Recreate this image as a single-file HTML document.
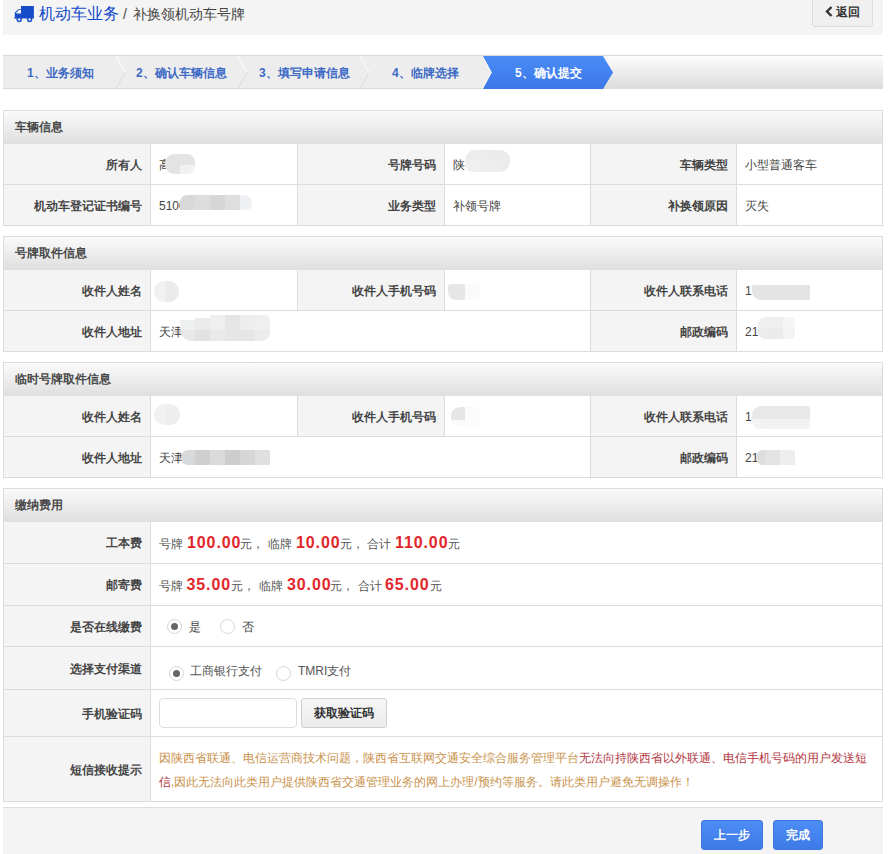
<!DOCTYPE html><html><head><meta charset="utf-8"><style>
*{box-sizing:border-box;margin:0;padding:0}
html,body{width:889px;height:854px;overflow:hidden;background:#fff}
body{font-family:"Liberation Sans",sans-serif;font-size:12px;color:#444;position:relative}
.a{position:absolute}
.hdr{left:3px;top:0;width:880px;height:35px;background:#f4f4f4}
.ttl{left:39px;top:4px;font-size:16px;color:#1048c8;white-space:nowrap;line-height:20px}
.sub{font-size:14px;color:#444}
.back{left:812px;top:-3px;width:61px;height:30px;border:1px solid #dcdcdc;border-radius:3px;background:#f0f0f0;font-weight:bold;font-size:12px;color:#333;line-height:28px;padding-left:12px;white-space:nowrap}
.steps{left:3px;top:55px;width:880px;height:34px;background:linear-gradient(#fcfcfc,#dcdcdc);border-top:1px solid #dadada}
.st{top:1px;height:33px;line-height:33px;font-weight:bold;font-size:12px;color:#3d6ac6;white-space:nowrap}
.pnl{left:3px;width:880px;border:1px solid #dcdcdc;background:#fff}
.ph{left:0;top:0;width:878px;height:33px;background:linear-gradient(#fafafa,#dfdfdf);font-weight:bold;color:#484848;line-height:32px;padding-left:11px}
.c{position:absolute;border-color:#dcdcdc;border-style:solid;border-width:0}
.lb{background:#f4f4f4;font-weight:bold;color:#444;text-align:right;padding-right:8px;padding-top:2px;display:flex;align-items:center;justify-content:flex-end}
.vl{z-index:2;display:flex;align-items:center;padding-left:8px;padding-top:2px;color:#444;white-space:nowrap}
.blob{position:absolute;background:#e6e6e6;border-radius:8px}
.red{color:#e3262b;font-weight:bold;font-size:16px}
.radio{position:absolute;width:15px;height:15px;border:1px solid #d6d6d6;border-radius:50%;background:#fff}
.radio.on::after{content:"";position:absolute;left:3px;top:3px;width:7px;height:7px;border-radius:50%;background:#666}
.btnb{position:absolute;border:1px solid #3a78e0;border-radius:3px;background:linear-gradient(#4d8cf5,#3d7ae6);color:#fff;font-weight:bold;font-size:12px;text-align:center;line-height:29px}
</style></head><body>
<div class="a hdr"></div>
<svg class="a" style="left:12px;top:4px" width="25" height="20" viewBox="0 0 25 20"><path fill="#154dc8" d="M9 2.1H21.9V14.6H9z M2.8 14.6V8.5L6.3 5.2H9.5V14.6z M2 13.8H4V14.6H2z"/><path fill="#f4f4f4" d="M4.2 9.6V8.7L6.7 6H9V9.6z"/><circle cx="7.2" cy="15.5" r="2.7" fill="#154dc8"/><circle cx="7.2" cy="15.5" r="1.2" fill="#f4f4f4"/><circle cx="17.6" cy="15.5" r="2.7" fill="#154dc8"/><circle cx="17.6" cy="15.5" r="1.2" fill="#f4f4f4"/></svg>
<div class="a ttl">机动车业务</div><div class="a sub" style="left:123px;top:5px;line-height:18px">/</div><div class="a sub" style="left:133px;top:5px;line-height:18px;white-space:nowrap">补换领机动车号牌</div>
<div class="a back"><svg style="position:absolute;left:12px;top:8px" width="8" height="11" viewBox="0 0 8 11"><path d="M6.5 1 L2 5.5 L6.5 10" fill="none" stroke="#333" stroke-width="2.4"/></svg><span style="position:absolute;left:23px;top:0">返回</span></div>
<div class="a steps">
<div class="a" style="left:0;top:0;width:486px;height:33px;background:#ededed;border-bottom:1px solid #d9d9d9"></div>
<svg class="a" style="left:112px;top:0" width="14" height="33" viewBox="0 0 14 33"><path d="M1 0 L10 16.5" fill="none" stroke="#fbfbfb" stroke-width="1.2"/><path d="M10 16.5 L1 33" fill="none" stroke="#dedede" stroke-width="1.1"/></svg>
<svg class="a" style="left:234px;top:0" width="14" height="33" viewBox="0 0 14 33"><path d="M1 0 L10 16.5" fill="none" stroke="#fbfbfb" stroke-width="1.2"/><path d="M10 16.5 L1 33" fill="none" stroke="#dedede" stroke-width="1.1"/></svg>
<svg class="a" style="left:356px;top:0" width="14" height="33" viewBox="0 0 14 33"><path d="M1 0 L10 16.5" fill="none" stroke="#fbfbfb" stroke-width="1.2"/><path d="M10 16.5 L1 33" fill="none" stroke="#dedede" stroke-width="1.1"/></svg>
<svg class="a" style="left:476px;top:0" width="136" height="33" viewBox="0 0 136 33"><defs><linearGradient id="g" x1="0" y1="0" x2="0" y2="1"><stop offset="0" stop-color="#4b8cf6"/><stop offset="1" stop-color="#3a78e8"/></linearGradient></defs><path d="M0 0 L3.8 0 L12.7 16.5 L3.8 32 L0 32z" fill="#ededed"/><path d="M3.8 0 H124 L134 16.5 L124 33 H3.8 L12.7 16.5z" fill="url(#g)"/><path d="M3.3 0 L12.2 16.5 L3.3 33" fill="none" stroke="#fafafa" stroke-width="0.9"/></svg>
<div class="a st" style="left:24px">1、业务须知</div>
<div class="a st" style="left:133px">2、确认车辆信息</div>
<div class="a st" style="left:256px">3、填写申请信息</div>
<div class="a st" style="left:389px">4、临牌选择</div>
<div class="a st" style="left:512px;color:#fff">5、确认提交</div>
</div>
<div class="a pnl" style="top:110px;height:116px">
<div class="a ph">车辆信息</div>
<div class="c lb" style="left:0px;top:33px;width:146px;height:40px;border-left-width:0px;border-top-width:0px;">所有人</div>
<div class="c vl" style="left:146px;top:33px;width:147px;height:40px;border-left-width:1px;border-top-width:0px;">高</div>
<div class="c lb" style="left:293px;top:33px;width:147px;height:40px;border-left-width:1px;border-top-width:0px;">号牌号码</div>
<div class="c vl" style="left:440px;top:33px;width:146px;height:40px;border-left-width:1px;border-top-width:0px;">陕</div>
<div class="c lb" style="left:586px;top:33px;width:146px;height:40px;border-left-width:1px;border-top-width:0px;">车辆类型</div>
<div class="c vl" style="left:732px;top:33px;width:146px;height:40px;border-left-width:1px;border-top-width:0px;">小型普通客车</div>
<div class="c lb" style="left:0px;top:73px;width:146px;height:41px;border-left-width:0px;border-top-width:1px;">机动车登记证书编号</div>
<div class="c vl" style="left:146px;top:73px;width:147px;height:41px;border-left-width:1px;border-top-width:1px;">5100</div>
<div class="c lb" style="left:293px;top:73px;width:147px;height:41px;border-left-width:1px;border-top-width:1px;">业务类型</div>
<div class="c vl" style="left:440px;top:73px;width:146px;height:41px;border-left-width:1px;border-top-width:1px;">补领号牌</div>
<div class="c lb" style="left:586px;top:73px;width:146px;height:41px;border-left-width:1px;border-top-width:1px;">补换领原因</div>
<div class="c vl" style="left:732px;top:73px;width:146px;height:41px;border-left-width:1px;border-top-width:1px;">灭失</div>
</div>
<div class="a pnl" style="top:236px;height:116px">
<div class="a ph">号牌取件信息</div>
<div class="c lb" style="left:0px;top:33px;width:146px;height:40px;border-left-width:0px;border-top-width:0px;">收件人姓名</div>
<div class="c vl" style="left:146px;top:33px;width:147px;height:40px;border-left-width:1px;border-top-width:0px;"></div>
<div class="c lb" style="left:293px;top:33px;width:147px;height:40px;border-left-width:1px;border-top-width:0px;">收件人手机号码</div>
<div class="c vl" style="left:440px;top:33px;width:146px;height:40px;border-left-width:1px;border-top-width:0px;"></div>
<div class="c lb" style="left:586px;top:33px;width:146px;height:40px;border-left-width:1px;border-top-width:0px;">收件人联系电话</div>
<div class="c vl" style="left:732px;top:33px;width:146px;height:40px;border-left-width:1px;border-top-width:0px;">1</div>
<div class="c lb" style="left:0px;top:73px;width:146px;height:41px;border-left-width:0px;border-top-width:1px;">收件人地址</div>
<div class="c vl" style="left:146px;top:73px;width:440px;height:41px;border-left-width:1px;border-top-width:1px;">天津</div>
<div class="c lb" style="left:586px;top:73px;width:146px;height:41px;border-left-width:1px;border-top-width:1px;">邮政编码</div>
<div class="c vl" style="left:732px;top:73px;width:146px;height:41px;border-left-width:1px;border-top-width:1px;">21</div>
</div>
<div class="a pnl" style="top:362px;height:116px">
<div class="a ph">临时号牌取件信息</div>
<div class="c lb" style="left:0px;top:33px;width:146px;height:40px;border-left-width:0px;border-top-width:0px;">收件人姓名</div>
<div class="c vl" style="left:146px;top:33px;width:147px;height:40px;border-left-width:1px;border-top-width:0px;"></div>
<div class="c lb" style="left:293px;top:33px;width:147px;height:40px;border-left-width:1px;border-top-width:0px;">收件人手机号码</div>
<div class="c vl" style="left:440px;top:33px;width:146px;height:40px;border-left-width:1px;border-top-width:0px;"></div>
<div class="c lb" style="left:586px;top:33px;width:146px;height:40px;border-left-width:1px;border-top-width:0px;">收件人联系电话</div>
<div class="c vl" style="left:732px;top:33px;width:146px;height:40px;border-left-width:1px;border-top-width:0px;">1</div>
<div class="c lb" style="left:0px;top:73px;width:146px;height:41px;border-left-width:0px;border-top-width:1px;">收件人地址</div>
<div class="c vl" style="left:146px;top:73px;width:440px;height:41px;border-left-width:1px;border-top-width:1px;">天津</div>
<div class="c lb" style="left:586px;top:73px;width:146px;height:41px;border-left-width:1px;border-top-width:1px;">邮政编码</div>
<div class="c vl" style="left:732px;top:73px;width:146px;height:41px;border-left-width:1px;border-top-width:1px;">21</div>
</div>
<div class="a pnl" style="top:488px;height:314px">
<div class="a ph">缴纳费用</div>
<div class="c lb" style="left:0px;top:33px;width:146px;height:41px;border-left-width:0px;border-top-width:0px;">工本费</div>
<div class="c vl" style="left:146px;top:33px;width:732px;height:41px;border-left-width:1px;border-top-width:0px;"></div>
<div class="c lb" style="left:0px;top:74px;width:146px;height:42px;border-left-width:0px;border-top-width:1px;">邮寄费</div>
<div class="c vl" style="left:146px;top:74px;width:732px;height:42px;border-left-width:1px;border-top-width:1px;"></div>
<div class="c lb" style="left:0px;top:116px;width:146px;height:41px;border-left-width:0px;border-top-width:1px;">是否在线缴费</div>
<div class="c vl" style="left:146px;top:116px;width:732px;height:41px;border-left-width:1px;border-top-width:1px;"></div>
<div class="c lb" style="left:0px;top:157px;width:146px;height:43px;border-left-width:0px;border-top-width:1px;">选择支付渠道</div>
<div class="c vl" style="left:146px;top:157px;width:732px;height:43px;border-left-width:1px;border-top-width:1px;"></div>
<div class="c lb" style="left:0px;top:200px;width:146px;height:47px;border-left-width:0px;border-top-width:1px;">手机验证码</div>
<div class="c vl" style="left:146px;top:200px;width:732px;height:47px;border-left-width:1px;border-top-width:1px;"></div>
<div class="c lb" style="left:0px;top:247px;width:146px;height:65px;border-left-width:0px;border-top-width:1px;">短信接收提示</div>
<div class="c vl" style="left:146px;top:247px;width:732px;height:65px;border-left-width:1px;border-top-width:1px;"></div>
</div>
<div class="a" style="left:159px;top:536px;line-height:16px;white-space:nowrap;color:#555">号牌</div>
<div class="a red" style="left:187px;top:533px;line-height:20px;letter-spacing:0.9px;white-space:nowrap">100.00</div>
<div class="a" style="left:240px;top:536px;line-height:16px;white-space:nowrap;color:#555">元，</div>
<div class="a" style="left:268px;top:536px;line-height:16px;white-space:nowrap;color:#555">临牌</div>
<div class="a red" style="left:296px;top:533px;line-height:20px;letter-spacing:0.9px;white-space:nowrap">10.00</div>
<div class="a" style="left:340px;top:536px;line-height:16px;white-space:nowrap;color:#555">元，</div>
<div class="a" style="left:367px;top:536px;line-height:16px;white-space:nowrap;color:#555">合计</div>
<div class="a red" style="left:395px;top:533px;line-height:20px;letter-spacing:0.9px;white-space:nowrap">110.00</div>
<div class="a" style="left:448px;top:536px;line-height:16px;white-space:nowrap;color:#555">元</div>
<div class="a" style="left:159px;top:578px;line-height:16px;white-space:nowrap;color:#555">号牌</div>
<div class="a red" style="left:186.5px;top:575px;line-height:20px;letter-spacing:0.9px;white-space:nowrap">35.00</div>
<div class="a" style="left:230.5px;top:578px;line-height:16px;white-space:nowrap;color:#555">元，</div>
<div class="a" style="left:258.5px;top:578px;line-height:16px;white-space:nowrap;color:#555">临牌</div>
<div class="a red" style="left:287px;top:575px;line-height:20px;letter-spacing:0.9px;white-space:nowrap">30.00</div>
<div class="a" style="left:330px;top:578px;line-height:16px;white-space:nowrap;color:#555">元，</div>
<div class="a" style="left:357.5px;top:578px;line-height:16px;white-space:nowrap;color:#555">合计</div>
<div class="a red" style="left:385px;top:575px;line-height:20px;letter-spacing:0.9px;white-space:nowrap">65.00</div>
<div class="a" style="left:429.5px;top:578px;line-height:16px;white-space:nowrap;color:#555">元</div>
<div class="radio on" style="left:167px;top:619px"></div><div class="a" style="left:189px;top:620px;line-height:15px">是</div>
<div class="radio" style="left:220px;top:619px"></div><div class="a" style="left:242px;top:620px;line-height:15px">否</div>
<div class="radio on" style="left:169px;top:666px"></div><div class="a" style="left:190px;top:664px;line-height:15px;color:#555">工商银行支付</div>
<div class="radio" style="left:276px;top:666px"></div><div class="a" style="left:298px;top:664px;line-height:15px;color:#555">TMRI支付</div>
<div class="a" style="left:159px;top:698px;width:138px;height:30px;border:1px solid #dcdcdc;border-radius:4px;background:#fff"></div>
<div class="a" style="left:301px;top:698px;width:86px;height:30px;border:1px solid #d0d0d0;border-radius:3px;background:linear-gradient(#f7f7f7,#ebebeb);font-weight:bold;font-size:12px;color:#333;text-align:center;line-height:29px">获取验证码</div>
<div class="a" style="left:159px;top:746px;width:720px;line-height:24px;color:#c8924b;font-size:12px">因陕西省联通、电信运营商技术问题，陕西省互联网交通安全综合服务管理平台<span style="color:#b3373f">无法向持陕西省以外联通、电信手机号码的用户发送短信</span>,因此无法向此类用户提供陕西省交通管理业务的网上办理/预约等服务。请此类用户避免无调操作！</div>
<div class="a" style="z-index:3;left:165px;top:154px;width:30px;height:20px;border-radius:9px 8px 8px 9px;overflow:hidden"><div class="a" style="left:0px;top:0px;width:15px;height:20px;background:#e3e3e3"></div><div class="a" style="left:15px;top:0px;width:15px;height:11px;background:#e4e4e4"></div><div class="a" style="left:15px;top:11px;width:15px;height:9px;background:#f1f1f1"></div></div>
<div class="a" style="z-index:3;left:180px;top:195px;width:72px;height:15px;border-radius:7px 8px 6px 2px;overflow:hidden"><div class="a" style="left:0px;top:0px;width:15px;height:15px;background:#d9d9d9"></div><div class="a" style="left:15px;top:0px;width:15px;height:15px;background:#dddddd"></div><div class="a" style="left:30px;top:0px;width:15px;height:15px;background:#d6d6d6"></div><div class="a" style="left:45px;top:0px;width:15px;height:15px;background:#dedede"></div><div class="a" style="left:60px;top:0px;width:12px;height:15px;background:#eef0f3"></div></div>
<div class="a" style="z-index:3;left:465px;top:150px;width:45px;height:22px;border-radius:10px 10px 10px 8px;overflow:hidden"><div class="a" style="left:0px;top:0px;width:16px;height:9px;background:#ececec"></div><div class="a" style="left:16px;top:0px;width:16px;height:9px;background:#ebebeb"></div><div class="a" style="left:32px;top:0px;width:15px;height:9px;background:#eaeaea"></div><div class="a" style="left:0px;top:9px;width:16px;height:13px;background:#efefef"></div><div class="a" style="left:16px;top:9px;width:16px;height:13px;background:#eeeeee"></div><div class="a" style="left:32px;top:9px;width:15px;height:13px;background:#ececec"></div></div>
<div class="a" style="z-index:3;left:154px;top:281px;width:25px;height:21px;border-radius:10px;overflow:hidden"><div class="a" style="left:0px;top:0px;width:12px;height:21px;background:#f1f1f1"></div><div class="a" style="left:12px;top:0px;width:13px;height:21px;background:#ebebeb"></div></div>
<div class="a" style="z-index:3;left:180px;top:315px;width:90px;height:26px;border-radius:4px 5px 8px 12px / 4px 5px 8px 12px;overflow:hidden"><div class="a" style="left:0px;top:5px;width:15px;height:10px;background:#eef0f0"></div><div class="a" style="left:15px;top:3px;width:15px;height:12px;background:#ebebeb"></div><div class="a" style="left:30px;top:0px;width:15px;height:15px;background:#efefef"></div><div class="a" style="left:45px;top:0px;width:15px;height:15px;background:#e5e5e5"></div><div class="a" style="left:60px;top:0px;width:15px;height:15px;background:#ededed"></div><div class="a" style="left:75px;top:0px;width:15px;height:15px;background:#f0f0f0"></div><div class="a" style="left:0px;top:15px;width:15px;height:11px;background:#e8e8ea"></div><div class="a" style="left:15px;top:15px;width:15px;height:11px;background:#e2e2e2"></div><div class="a" style="left:30px;top:15px;width:15px;height:11px;background:#eaeaea"></div><div class="a" style="left:45px;top:15px;width:15px;height:11px;background:#e6e6e6"></div><div class="a" style="left:60px;top:15px;width:15px;height:11px;background:#e6e6e6"></div><div class="a" style="left:75px;top:15px;width:15px;height:11px;background:#ececec"></div></div>
<div class="a" style="z-index:3;left:448px;top:284px;width:32px;height:16px;border-radius:3px 5px 5px 8px;overflow:hidden"><div class="a" style="left:0px;top:0px;width:17px;height:16px;background:#e6e6e6"></div><div class="a" style="left:17px;top:0px;width:15px;height:16px;background:#fafafa"></div></div>
<div class="a" style="z-index:3;left:752px;top:285px;width:58px;height:15px;border-radius:2px 0 0 9px;overflow:hidden"><div class="a" style="left:0px;top:0px;width:58px;height:15px;background:#e4e4e4"></div></div>
<div class="a" style="z-index:3;left:757px;top:317px;width:38px;height:22px;border-radius:9px 2px 2px 9px;overflow:hidden"><div class="a" style="left:0px;top:0px;width:13px;height:11px;background:#f0f0f0"></div><div class="a" style="left:13px;top:0px;width:13px;height:11px;background:#efefef"></div><div class="a" style="left:26px;top:0px;width:12px;height:11px;background:#f5f5f5"></div><div class="a" style="left:0px;top:11px;width:13px;height:11px;background:#ececec"></div><div class="a" style="left:13px;top:11px;width:13px;height:11px;background:#ebebeb"></div><div class="a" style="left:26px;top:11px;width:12px;height:11px;background:#f4f4f4"></div></div>
<div class="a" style="z-index:3;left:154px;top:404px;width:26px;height:21px;border-radius:10px;overflow:hidden"><div class="a" style="left:0px;top:0px;width:12px;height:21px;background:#f1f1f1"></div><div class="a" style="left:12px;top:0px;width:14px;height:21px;background:#eeeeee"></div></div>
<div class="a" style="z-index:3;left:181px;top:450px;width:89px;height:15px;border-radius:7px 1px 1px 7px;overflow:hidden"><div class="a" style="left:0px;top:0px;width:14px;height:15px;background:#d8d9db"></div><div class="a" style="left:14px;top:0px;width:15px;height:15px;background:#cfcfcf"></div><div class="a" style="left:29px;top:0px;width:15px;height:15px;background:#dadada"></div><div class="a" style="left:44px;top:0px;width:15px;height:15px;background:#cdcdcd"></div><div class="a" style="left:59px;top:0px;width:15px;height:15px;background:#d6d6d6"></div><div class="a" style="left:74px;top:0px;width:15px;height:15px;background:#e0e0e0"></div></div>
<div class="a" style="z-index:3;left:451px;top:407px;width:29px;height:20px;border-radius:9px 2px 2px 9px;overflow:hidden"><div class="a" style="left:0px;top:0px;width:14px;height:13px;background:#e6e6e6"></div><div class="a" style="left:0px;top:13px;width:14px;height:7px;background:#fafafa"></div><div class="a" style="left:14px;top:0px;width:15px;height:20px;background:#fcfcfc"></div></div>
<div class="a" style="z-index:3;left:752px;top:406px;width:58px;height:23px;border-radius:9px 2px 2px 9px;overflow:hidden"><div class="a" style="left:0px;top:0px;width:58px;height:13px;background:#e8e8e8"></div><div class="a" style="left:0px;top:13px;width:58px;height:10px;background:#f3f3f3"></div></div>
<div class="a" style="z-index:3;left:756px;top:450px;width:39px;height:15px;border-radius:7px 1px 1px 7px;overflow:hidden"><div class="a" style="left:0px;top:0px;width:9px;height:15px;background:#dddddd"></div><div class="a" style="left:9px;top:0px;width:15px;height:15px;background:#e3e3e3"></div><div class="a" style="left:24px;top:0px;width:15px;height:15px;background:#eeeeee"></div></div>
<div class="a" style="left:3px;top:807px;width:880px;height:47px;background:#f4f4f4;border-top:1px solid #dedede"></div>
<div class="btnb" style="left:701px;top:820px;width:62px;height:30px">上一步</div>
<div class="btnb" style="left:773px;top:820px;width:50px;height:30px">完成</div>
</body></html>
